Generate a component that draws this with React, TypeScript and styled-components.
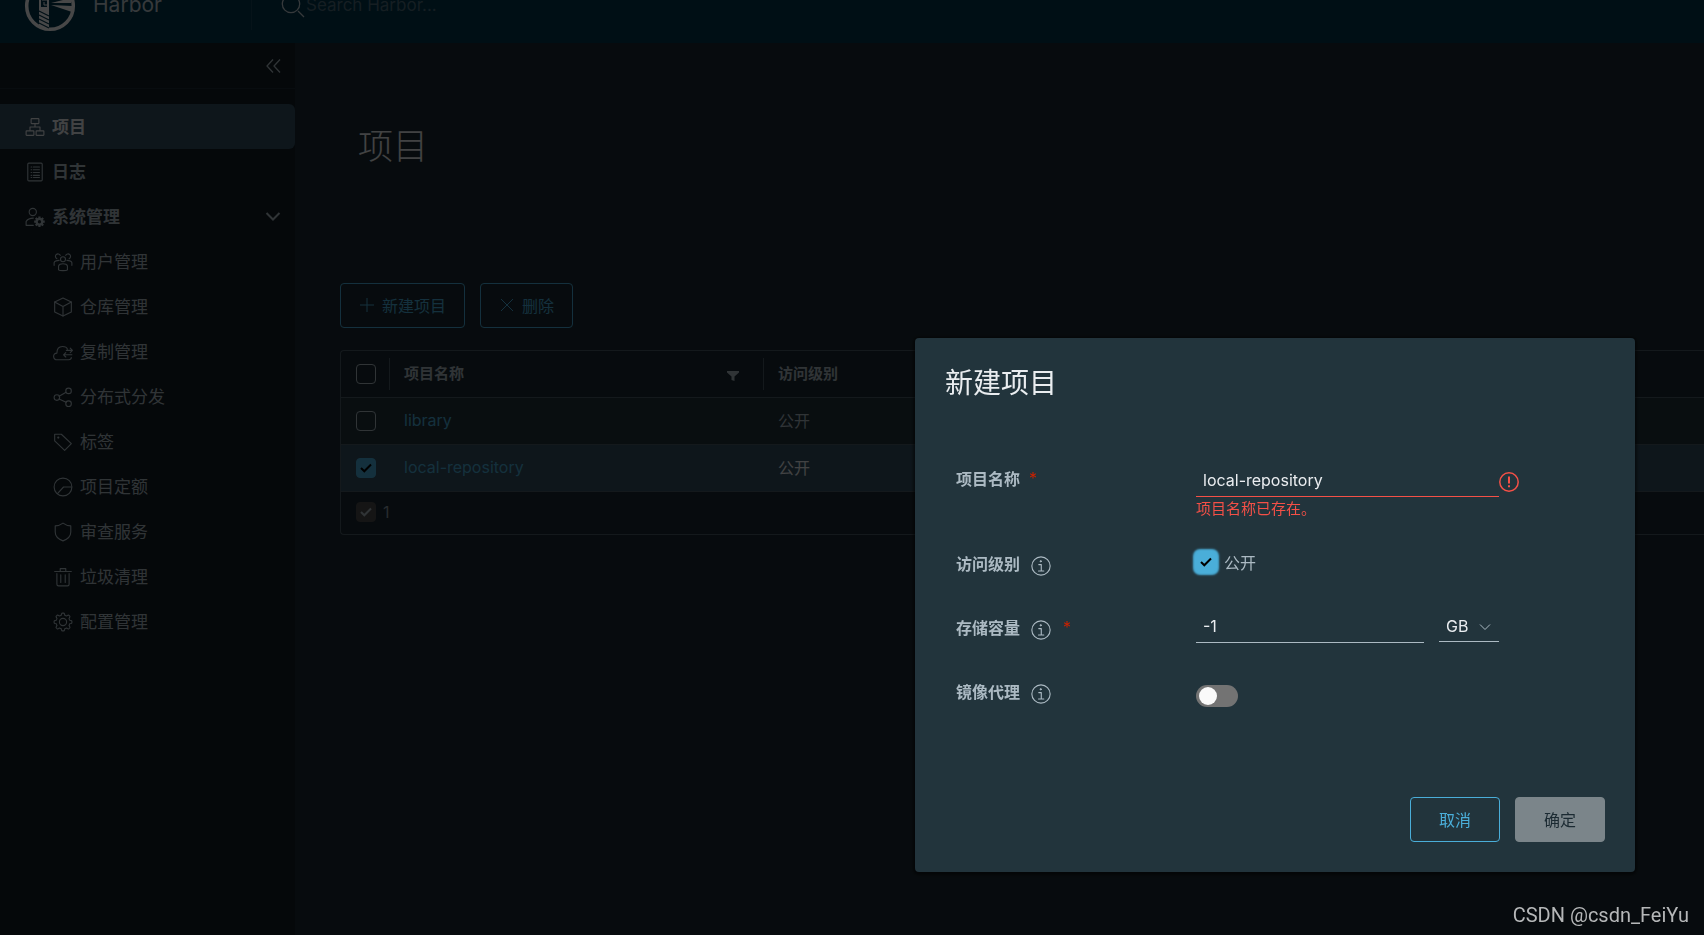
import React from 'react';
import styled, { createGlobalStyle, css } from 'styled-components';

const latin = "'Inter'";
const cjk = "'Noto Sans CJK SC'";

const GlobalStyle = createGlobalStyle`
  *, *::before, *::after { box-sizing: border-box; }
  html, body, #root { height: 100%; }
  body {
    margin: 0;
    background: #1b2a32;
    color: #acbac3;
    font-family: ${latin}, ${cjk}, sans-serif;
    font-size: 16px;
    overflow: hidden;
  }
  button, input, select { font: inherit; color: inherit; }
`;

const Page = styled.div`
  display: flex;
  flex-direction: column;
  height: 100%;
  overflow: hidden;
`;

const Header = styled.header`
  display: flex;
  align-items: center;
  flex: none;
  height: 74px;
  margin-top: -31px;
  padding-left: 24px;
  background: #00364d;
`;

const Brand = styled.a`
  display: flex;
  align-items: center;
  gap: 17px;
  width: 228px;
  height: 48px;
  border-right: 1px solid #17465b;
  color: #c1cdd4;
  font-size: 21px;
  text-decoration: none;
`;

const BrandName = styled.span`
  padding-bottom: 2px;
  line-height: 20px;
`;

const Search = styled.label`
  display: flex;
  align-items: center;
  flex: 1;
  padding-left: 29px;
  color: #c1cdd4;
`;

const SearchInput = styled.input`
  flex: 1;
  padding: 0 0 2px;
  border: 0;
  background: none;
  font-size: 17px;
  &::placeholder { color: #4e6c7c; opacity: 1; }
`;

const Body = styled.div`
  display: flex;
  flex: 1;
  min-height: 0;
`;

const Sidebar = styled.nav`
  flex: none;
  width: 295px;
  background: #121e25;
`;

const CollapseBar = styled.div`
  display: flex;
  justify-content: flex-end;
  height: 46px;
  margin-bottom: 15px;
  padding: 12px 10px 0 0;
  border-bottom: 1px solid #1f2e37;
`;

const IconButton = styled.button`
  display: inline-flex;
  padding: 0;
  border: 0;
  background: none;
`;

const NavList = styled.ul`
  margin: 0;
  padding: 0;
  list-style: none;
`;

const NavLink = styled.a<{ $active?: boolean; $sub?: boolean }>`
  display: flex;
  align-items: center;
  gap: 7px;
  height: 45px;
  padding: 0 11px 0 ${p => (p.$sub ? 53 : 25)}px;
  border-radius: 0 6px 6px 0;
  font-size: 17px;
  font-weight: ${p => (p.$sub ? 400 : 700)};
  text-decoration: none;
  color: ${p => (p.$active ? '#eaedf0' : '#acbac3')};
  background: ${p => (p.$active ? '#324f62' : 'none')};
`;

const NavText = styled.span`
  flex: 1;
  padding-bottom: 3px;
`;

const Main = styled.main`
  flex: 1;
  min-width: 0;
  padding: 77px 0 0 45px;
  overflow: hidden;
`;

const PageTitle = styled.h1`
  margin: 0 0 110px 18px;
  color: #eaedf0;
  font-size: 35px;
  font-weight: 300;
  line-height: 53px;
`;

const Toolbar = styled.div`
  display: flex;
  gap: 15px;
  margin-bottom: 22px;
`;

const Button = styled.button<{ $solid?: boolean; $wide?: boolean }>`
  display: inline-flex;
  align-items: center;
  justify-content: center;
  gap: 7px;
  height: 45px;
  padding: 0 18px 2px;
  border: 1px solid #4aaed9;
  border-radius: 4px;
  background: none;
  color: #4aaed9;
  font-size: 16px;
  ${p => p.$wide && css`width: 90px; padding: 0 0 2px;`}
  ${p => p.$solid && css`
    border-color: #7b858a;
    background: #7b858a;
    color: #1b2a32;
  `}
`;

const GridFrame = styled.div`
  border: 1px solid #495a66;
  border-right: 0;
  border-radius: 4px 0 0 4px;
  overflow: hidden;
`;

const Grid = styled.table`
  width: 100%;
  border-collapse: collapse;
  table-layout: fixed;
`;

const HeadCell = styled.th<{ $w?: number }>`
  width: ${p => (p.$w ? `${p.$w}px` : 'auto')};
  height: 46px;
  padding: 0;
  border-bottom: 1px solid #495a66;
  font-size: 15px;
  font-weight: 700;
  text-align: left;
`;

const HeadInner = styled.div<{ $divider?: boolean }>`
  display: flex;
  align-items: center;
  justify-content: space-between;
  height: 32px;
  padding: 0 23px 0 14px;
  border-right: ${p => (p.$divider ? '1px solid #495a66' : '0')};
  th:first-child > & { padding-left: 15px; }
`;

const HeadText = styled.span`
  padding-bottom: 2px;
`;

const Row = styled.tr<{ $selected?: boolean }>`
  background: ${p => (p.$selected ? '#324f62' : '#22343c')};
  color: ${p => (p.$selected ? '#eaedf0' : '#acbac3')};
`;

const Cell = styled.td`
  height: 47px;
  padding: 0 14px 1px;
  border-bottom: 1px solid #495a66;
  &:first-child { padding: 0 0 0 15px; }
`;

const RowLink = styled.a`
  color: #4aaed9;
  text-decoration: none;
`;

const GridFooter = styled.div`
  display: flex;
  align-items: center;
  gap: 7px;
  height: 42px;
  padding: 0 0 2px 15px;
  color: #8c9ba5;
`;

const Check = styled.input<{ $glow?: boolean }>`
  appearance: none;
  display: block;
  flex: none;
  width: 20px;
  height: 20px;
  margin: 0;
  border: 1px solid #acbac3;
  border-radius: 4px;
  &:checked {
    border-color: #4aaed9;
    background-color: #4aaed9;
  }
  &:disabled {
    border-color: #4d4d4d;
    background-color: #4d4d4d;
  }
  ${p => p.$glow && css`box-shadow: 0 0 2px 3px #4aaed9;`}
`;

const CheckBox = styled.span`
  display: inline-grid;
  flex: none;
  vertical-align: middle;
  > * { grid-area: 1 / 1; }
  > svg { place-self: center; pointer-events: none; }
`;

const Backdrop = styled.div`
  position: fixed;
  inset: 0;
  background: rgba(0, 0, 0, 0.72);
`;

const Dialog = styled.section`
  position: fixed;
  top: 338px;
  right: 69px;
  width: 720px;
  padding: 25px 30px 30px;
  border-radius: 4px;
  background: #22343c;
  box-shadow: 0 1px 3px 2px rgba(0, 0, 0, 0.5);
`;

const DialogTitle = styled.h2`
  margin: 0 0 61px;
  color: #eaedf0;
  font-size: 28px;
  font-weight: 400;
  line-height: 40px;
`;

const Form = styled.form`
  display: block;
`;

const FormRow = styled.div<{ $tall?: boolean }>`
  display: grid;
  grid-template-columns: 240px 1fr;
  align-items: start;
  height: ${p => (p.$tall ? 85 : 64)}px;
  padding-left: 11px;
`;

const FieldLabel = styled.label`
  display: flex;
  align-items: center;
  gap: 9px;
  height: 28px;
  font-weight: 700;
  > svg { margin: 6px 3px 0 2px; }
`;

const Required = styled.span`
  color: #c92100;
  font-weight: 400;
  line-height: 20px;
`;

const Field = styled.div`
  padding-top: 3px;
`;

const Line = styled.div`
  display: flex;
  align-items: flex-start;
  > svg { margin-top: 5px; }
`;

const TextInput = styled.input<{ $error?: boolean; $width: number }>`
  width: ${p => p.$width}px;
  height: 30px;
  padding: 0 7px 4px;
  border: 0;
  border-bottom: 1px solid ${p => (p.$error ? '#f55047' : '#acbac3')};
  background: none;
  color: #eaedf0;
  outline: none;
`;

const ErrorText = styled.div`
  color: #f55047;
  font-size: 15px;
  line-height: 24px;
`;

const CheckLabel = styled.label`
  display: flex;
  align-items: center;
  gap: 8px;
  height: 26px;
`;

const SelectBox = styled.span`
  display: grid;
  align-items: center;
  width: 60px;
  height: 29px;
  margin-left: 15px;
  > * { grid-area: 1 / 1; }
  > svg { justify-self: end; margin: 0 8px 2px 0; pointer-events: none; }
`;

const Select = styled.select`
  appearance: none;
  width: 100%;
  height: 100%;
  padding: 0 7px 2px;
  border: 0;
  border-bottom: 1px solid #acbac3;
  background: none;
  color: #eaedf0;
`;

const Toggle = styled.input`
  appearance: none;
  display: flex;
  align-items: center;
  width: 42px;
  height: 22px;
  margin: 8px 0 0;
  padding: 0 3px;
  border-radius: 11px;
  background: #737373;
  &::before {
    content: '';
    width: 18px;
    height: 18px;
    border-radius: 50%;
    background: #fafafa;
  }
`;

const Actions = styled.div`
  display: flex;
  justify-content: flex-end;
  gap: 15px;
  margin-top: 56px;
`;

const Credit = styled.div`
  position: fixed;
  right: 15px;
  bottom: 6px;
  color: #b5b7b8;
  font-family: Roboto, 'Liberation Sans', sans-serif;
  font-size: 20px;
  line-height: 28px;
`;

const Svg = ({ size = 20, sw = 2, children }: { size?: number; sw?: number; children: React.ReactNode }) => (
  <svg width={size} height={size} viewBox="0 0 36 36" fill="none" stroke="currentColor" strokeWidth={sw}
    strokeLinejoin="round" strokeLinecap="round" aria-hidden="true">
    {children}
  </svg>
);

const gearPath = () => {
  const pts: string[] = [];
  for (let i = 0; i < 96; i++) {
    const a = (i / 96) * Math.PI * 2;
    const w = Math.max(-1, Math.min(1, Math.cos(a * 8) * 1.8));
    const r = 14.2 + w * 1.8;
    pts.push(`${(18 + r * Math.cos(a)).toFixed(2)} ${(18 + r * Math.sin(a)).toFixed(2)}`);
  }
  return `M${pts.join('L')}Z`;
};

const icons: Record<string, React.ReactNode> = {
  projects: <><rect x="11" y="3" width="14" height="9" rx="1" /><rect x="2" y="25" width="14" height="8" rx="1" /><rect x="20" y="25" width="14" height="8" rx="1" /><path d="M18 12v6M9 24v-6h18v6" /></>,
  logs: <><rect x="5" y="2" width="26" height="32" rx="2" /><path d="M11 9h1M15 9h11M11 14h1M15 14h11M11 19h1M15 19h11M11 24h1M15 24h11M11 28h1M15 28h11" /></>,
  admin: <><circle cx="14" cy="9" r="6.500" /><path d="M15 33H2v-7c3-5 8-6 13-6" /><circle cx="26" cy="26.500" r="5" strokeWidth="4" /><path d="M26 17v4M26 32v4M16.500 26.500h4M31.500 26.500h4M19.300 19.800l3 3M29.700 30.200l3 3M32.700 19.800l-3 3M22.300 30.200l-3 3" strokeWidth="4" strokeLinecap="butt" /></>,
  users: <><circle cx="18" cy="13" r="4.500" /><path d="M10 32v-7c2-5 14-5 16 0v7c-2 2-14 2-16 0z" /><path d="M7 12a4.500 4.500 0 1 1 6-6M29 12a4.500 4.500 0 1 0-6-6M2 24v-5c1-3 4-4 9-4M34 24v-5c-1-3-4-4-9-4" /></>,
  cube: <><path d="M18 2l15 7v18l-15 7-15-7V9z" /><path d="M3 9l15 8 15-8M18 17v17" /></>,
  cloud: <><path d="M33 28c0 3-2 4-5 4H8c-9 0-9-12-1-12 0-7 3-12 10-12 5 0 8 2 9 5" /><path d="M24 15h10M31 11l4 4-4 4M34 23H19M23 19l-4 4 4 4" /></>,
  share: <><circle cx="7" cy="19" r="5" /><circle cx="28" cy="7" r="5" /><circle cx="28" cy="30" r="5" /><path d="M11 16.500l12.500-7M11 21.500l12.500 6" /></>,
  tag: <><path d="M3 4h12l18 17-12 12L3 16z" /><circle cx="9.500" cy="10" r="1" /></>,
  quota: <><circle cx="18" cy="18" r="16" /><path d="M33 18H19L8 30" /></>,
  shield: <path d="M18 2c4 3 9 5 14 5v11c0 8-6 13-14 16C10 31 4 26 4 18V7c5 0 10-2 14-5z" />,
  trash: <><path d="M3 8h30M13 7V3h10v4M7 12v19c0 2 1 3 3 3h16c2 0 3-1 3-3V12M14 14v14M22 14v14" /></>,
  gear: <><path d={gearPath()} /><circle cx="18" cy="18" r="6.500" /></>,
  info: <><circle cx="18" cy="18" r="16.500" /><circle cx="17.500" cy="9.500" r="1.200" fill="currentColor" strokeWidth="1.500" /><path d="M14 15.500h4.500v11M13.500 27h9.500" /></>,
};

const CheckMark = ({ color = '#000' }: { color?: string }) => (
  <svg width="12" height="12" viewBox="0 0 12 12" fill="none" stroke={color} strokeWidth="2" aria-hidden="true">
    <path d="M1 6l3.300 3.300L11 2.500" />
  </svg>
);

const Logo = () => (
  <svg width="52" height="52" viewBox="0 0 52 52" fill="none" aria-hidden="true">
    <circle cx="26" cy="26" r="23.300" stroke="#fff" strokeWidth="3.500" />
    <path d="M16 14h8v14h-8z" stroke="#fff" strokeWidth="2" />
    <path d="M18 20h6v5h-4v-3" stroke="#fff" />
    <path d="M15 28h10v22l-10-3z" fill="#fff" />
    <path d="M15 31l10 5M15 35l10 5M15 39l10 5M15 43l10 5" stroke="#00364d" strokeWidth="1.200" />
    <path d="M27 23l20-5v5zM27 25l21 7v-6z" fill="#fff" />
  </svg>
);

const subItems = [
  ['users', '用户管理'], ['cube', '仓库管理'], ['cloud', '复制管理'], ['share', '分布式分发'], ['tag', '标签'],
  ['quota', '项目定额'], ['shield', '审查服务'], ['trash', '垃圾清理'], ['gear', '配置管理'],
];

const rows = [
  { name: 'library', access: '公开', selected: false },
  { name: 'local-repository', access: '公开', selected: true },
];

export default function App() {
  return (
    <>
      <GlobalStyle />
      <Page>
        <Header>
          <Brand href="#"><Logo /><BrandName>Harbor</BrandName></Brand>
          <Search>
            <svg width="25" height="25" viewBox="0 0 25 25" fill="none" stroke="currentColor" strokeWidth="1.300" aria-hidden="true">
              <circle cx="10" cy="10" r="8.700" /><path d="M17 17l6 6" />
            </svg>
            <SearchInput placeholder="Search Harbor..." aria-label="Search Harbor" />
          </Search>
        </Header>
        <Body>
          <Sidebar>
            <CollapseBar>
              <IconButton aria-label="折叠">
                <svg width="22" height="22" viewBox="0 0 22 22" fill="none" stroke="#acbac3" strokeWidth="1.300"><path d="M10 4.500L4 11l6 6.500M17 4.500L11 11l6 6.500" /></svg>
              </IconButton>
            </CollapseBar>
            <NavList>
              <li><NavLink href="#" $active><Svg>{icons.projects}</Svg><NavText>项目</NavText></NavLink></li>
              <li><NavLink href="#"><Svg>{icons.logs}</Svg><NavText>日志</NavText></NavLink></li>
              <li>
                <NavLink href="#">
                  <Svg>{icons.admin}</Svg><NavText>系统管理</NavText>
                  <svg width="22" height="22" viewBox="0 0 22 22" fill="none" stroke="#acbac3" strokeWidth="2" aria-hidden="true"><path d="M4.500 7l6.500 6.500L17.500 7" /></svg>
                </NavLink>
                <NavList>
                  {subItems.map(([icon, text]) => (
                    <li key={text}><NavLink href="#" $sub><Svg>{icons[icon]}</Svg><NavText>{text}</NavText></NavLink></li>
                  ))}
                </NavList>
              </li>
            </NavList>
          </Sidebar>
          <Main>
            <PageTitle>项目</PageTitle>
            <Toolbar>
              <Button>
                <svg width="16" height="16" viewBox="0 0 16 16" stroke="currentColor" aria-hidden="true"><path d="M8 1v14M1 8h14" /></svg>
                新建项目
              </Button>
              <Button>
                <svg width="16" height="16" viewBox="0 0 16 16" stroke="currentColor" aria-hidden="true"><path d="M2 2l12 12M14 2L2 14" /></svg>
                删除
              </Button>
            </Toolbar>
            <GridFrame>
              <Grid>
                <thead>
                  <tr>
                    <HeadCell $w={49}><HeadInner $divider><CheckBox><Check type="checkbox" aria-label="全选" /></CheckBox></HeadInner></HeadCell>
                    <HeadCell $w={374}>
                      <HeadInner $divider>
                        <HeadText>项目名称</HeadText>
                        <IconButton aria-label="筛选">
                          <svg width="14" height="14" viewBox="0 0 14 14" fill="#acbac3"><path d="M1 4h12v1.500L8.500 9.500v4.500l-3-1V9.500L1 5.500z" /></svg>
                        </IconButton>
                      </HeadInner>
                    </HeadCell>
                    <HeadCell><HeadInner><HeadText>访问级别</HeadText></HeadInner></HeadCell>
                  </tr>
                </thead>
                <tbody>
                  {rows.map(r => (
                    <Row key={r.name} $selected={r.selected}>
                      <Cell>
                        <CheckBox>
                          <Check type="checkbox" defaultChecked={r.selected} aria-label={r.name} />
                          {r.selected && <CheckMark />}
                        </CheckBox>
                      </Cell>
                      <Cell><RowLink href="#">{r.name}</RowLink></Cell>
                      <Cell>{r.access}</Cell>
                    </Row>
                  ))}
                </tbody>
              </Grid>
              <GridFooter>
                <CheckBox><Check type="checkbox" defaultChecked disabled aria-label="已选" /><CheckMark color="#acbac3" /></CheckBox>
                1
              </GridFooter>
            </GridFrame>
          </Main>
        </Body>
      </Page>
      <Backdrop />
      <Dialog role="dialog" aria-labelledby="dialog-title">
        <DialogTitle id="dialog-title">新建项目</DialogTitle>
        <Form>
          <FormRow $tall>
            <FieldLabel htmlFor="name">项目名称<Required>*</Required></FieldLabel>
            <Field>
              <Line>
                <TextInput id="name" $error $width={303} defaultValue="local-repository" />
                <svg width="20" height="20" viewBox="0 0 20 20" fill="none" stroke="#f55047" aria-hidden="true">
                  <circle cx="10" cy="10" r="9.200" strokeWidth="1.500" /><path d="M10 4.500v7M10 13.300v2" strokeWidth="2" />
                </svg>
              </Line>
              <ErrorText>项目名称已存在。</ErrorText>
            </Field>
          </FormRow>
          <FormRow>
            <FieldLabel htmlFor="public">访问级别<Svg>{icons.info}</Svg></FieldLabel>
            <CheckLabel>
              <CheckBox><Check type="checkbox" id="public" defaultChecked $glow /><CheckMark /></CheckBox>
              公开
            </CheckLabel>
          </FormRow>
          <FormRow>
            <FieldLabel htmlFor="limit">存储容量<Svg>{icons.info}</Svg><Required>*</Required></FieldLabel>
            <Line>
              <TextInput id="limit" $width={228} defaultValue="-1" />
              <SelectBox>
                <Select aria-label="单位" defaultValue="GB"><option>GB</option></Select>
                <svg width="12" height="12" viewBox="0 0 12 12" fill="none" stroke="#acbac3" aria-hidden="true"><path d="M1 3.500l5 5 5-5" /></svg>
              </SelectBox>
            </Line>
          </FormRow>
          <FormRow>
            <FieldLabel htmlFor="proxy">镜像代理<Svg>{icons.info}</Svg></FieldLabel>
            <Toggle type="checkbox" role="switch" id="proxy" />
          </FormRow>
          <Actions>
            <Button type="button" $wide>取消</Button>
            <Button type="button" $wide $solid>确定</Button>
          </Actions>
        </Form>
      </Dialog>
      <Credit>CSDN @csdn_FeiYu</Credit>
    </>
  );
}
